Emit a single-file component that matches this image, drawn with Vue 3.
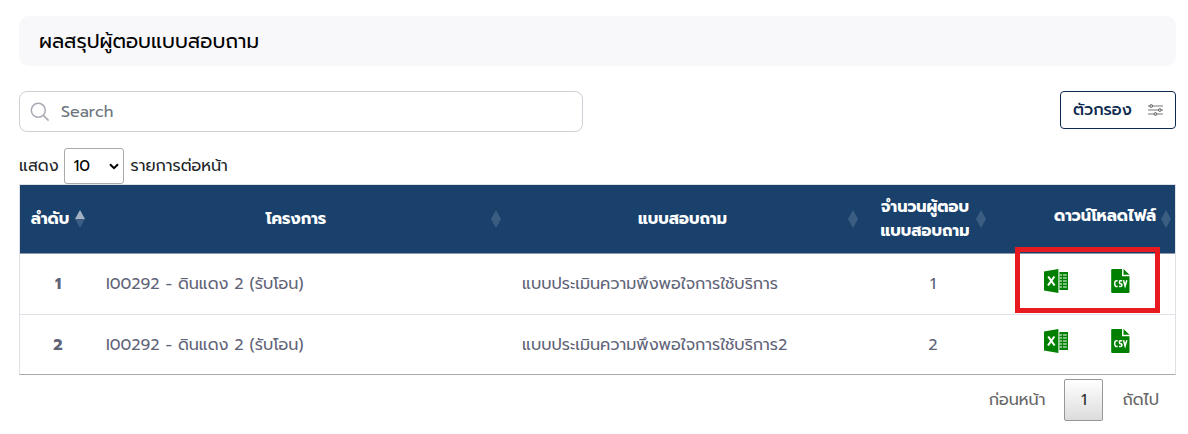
<script setup>
const columns = [
  { key: 'no', lines: ['ลำดับ'], sorted: true },
  { key: 'project', lines: ['โครงการ'] },
  { key: 'form', lines: ['แบบสอบถาม'] },
  { key: 'count', lines: ['จำนวนผู้ตอบ', 'แบบสอบถาม'] },
  { key: 'files', lines: ['ดาวน์โหลดไฟล์'] },
]
const rows = [
  { no: 1, project: 'I00292 - ดินแดง 2 (รับโอน)', form: 'แบบประเมินความพึงพอใจการใช้บริการ', count: 1, marked: true },
  { no: 2, project: 'I00292 - ดินแดง 2 (รับโอน)', form: 'แบบประเมินความพึงพอใจการใช้บริการ2', count: 2 },
]
</script>

<template>
  <main class="page">
    <header class="title"><span class="title-text">ผลสรุปผู้ตอบแบบสอบถาม</span></header>

    <div class="toolbar">
      <div class="search">
        <svg class="search-icon" width="20" height="20" viewBox="0 0 20 20">
          <circle cx="8.3" cy="8.3" r="7" />
          <path d="M13.4 13.4L18.6 18.6" />
        </svg>
        <span class="search-text">Search</span>
      </div>
      <div class="filter">
        <span class="filter-text">ตัวกรอง</span>
        <svg width="15" height="12" viewBox="0 0 15 12">
          <path d="M0 2H15M0 6H15M0 10H15" stroke="#777" stroke-width="1.2" />
          <g fill="#ddd" stroke="#666">
            <circle cx="3.2" cy="2" r="1.4" />
            <circle cx="11.8" cy="6" r="1.4" />
            <circle cx="7.5" cy="10" r="1.4" />
          </g>
        </svg>
      </div>
    </div>

    <div class="length">
      <span class="show-text">แสดง</span>
      <div class="select">
        <span>10</span>
        <svg width="10" height="7" viewBox="0 0 10 7"><path d="M1 1.2L5 5.2L9 1.2" /></svg>
      </div>
      <span class="per-text">รายการต่อหน้า</span>
    </div>

    <div class="table">
      <div class="row head">
        <div v-for="c in columns" :key="c.key" class="th">
          <div class="label">
            <span v-for="l in c.lines" :key="l" :class="['th-text', c.key]">{{ l }}</span>
          </div>
          <svg class="sort" width="10" height="18" viewBox="0 0 10 18">
            <path d="M5 0L10 9H0Z" :class="{ on: c.sorted }" />
            <path d="M0 9H10L5 18Z" />
          </svg>
        </div>
      </div>
      <div v-for="r in rows" :key="r.no" class="row body">
        <div class="td center strong">{{ r.no }}</div>
        <div class="td"><span class="project-text">{{ r.project }}</span></div>
        <div class="td"><span class="form-text">{{ r.form }}</span></div>
        <div class="td center">{{ r.count }}</div>
        <div class="td files">
          <svg width="24" height="24" viewBox="0 0 24 24">
            <path d="M0 2.6L14.4 0V24L0 21.4Z" fill="#008000" />
            <path d="M15.4 3H24V21H15.4Z" fill="#008000" />
            <path d="M15.4 6H18M15.4 9H18M15.4 12H18M15.4 15H18M15.4 18H18M19 6H22.8M19 9H22.8M19 12H22.8M19 15H22.8M19 18H22.8" stroke="#fff" stroke-width="1.1" />
            <path d="M4.2 7.5L10.6 16.5M10.4 7.5L4 16.5" stroke="#fff" stroke-width="2.1" />
          </svg>
          <svg width="19" height="24" viewBox="0 0 19 24">
            <path d="M1.2 0H11V7.2H18.5V23Q18.5 24 17.5 24H1.2Q.2 24 .2 23V1Q.2 0 1.2 0Z" fill="#008000" />
            <path d="M12.5 0L18.5 5.8H12.5Z" fill="#008000" />
            <path d="M6.7 11.9Q3.7 10.9 3.7 14.6T6.7 17.4M11.2 11.9Q8.4 11.1 8.4 13T10 14.7Q11.5 15.6 10.6 17Q9.8 17.8 8.1 17.2M12.5 11.3L14.1 17L15.8 11.3" fill="none" stroke="#fff" stroke-width="1.5" />
          </svg>
          <div v-if="r.marked" class="mark"></div>
        </div>
      </div>
    </div>

    <nav class="pager">
      <span class="prev-text">ก่อนหน้า</span>
      <span class="current">1</span>
      <span class="next-text">ถัดไป</span>
    </nav>
  </main>
</template>

<style>
body { background: #fff; }
</style>

<style scoped>
.page {
  box-sizing: border-box;
  width: 1188px;
  height: 434px;
  padding: 16px 12px 0 19px;
  overflow: hidden;
  font: 16px/24px Prompt, Inter, "Noto Sans Thai", "Noto Sans", sans-serif;
  color: #212529;
}
.page * { box-sizing: border-box; }
span { white-space: nowrap; }
svg { display: block; flex: none; }
.title { height: 50px; padding-left: 20px; display: flex; align-items: center; border-radius: 10px; background: #f8f8fb; color: #000; font-size: 20px; }
.toolbar { display: flex; justify-content: space-between; align-items: flex-start; margin-top: 25px; }
.search { width: 564px; height: 41px; padding-left: 10px; display: flex; align-items: center; gap: 11px; border: 1px solid #cfd0d8; border-radius: 8px; color: #6c757d; }
.search-icon { fill: none; stroke: #a9a9b4; stroke-width: 1.5; }
.filter { width: 116px; height: 38px; padding: 0 12px; display: flex; align-items: center; justify-content: space-between; border: 1px solid #0e2a50; border-radius: 4px; color: #0e2a50; font-weight: 500; }
.length { display: flex; align-items: center; height: 36px; margin-top: 16px; }
.select { width: 60px; height: 36px; margin: 0 7px 0 5px; padding: 0 4px 0 9px; display: flex; align-items: center; justify-content: space-between; border: 1px solid #aaa; border-radius: 3px; color: #000; }
.select svg { fill: none; stroke: #000; stroke-width: 2; }
.table { width: 1157px; border: 1px solid #dee2e6; border-bottom-color: #aaa; }
.row { display: grid; grid-template-columns: 76px 416px 357px 128px 178px; }
.head { height: 69px; background: #19416c; border-bottom: 1px solid #8c98a8; color: #fff; font-weight: 700; }
.th { display: flex; align-items: center; justify-content: space-between; padding: 0 11px 0 10px; }
.label { flex: 1; display: flex; flex-direction: column; align-items: center; padding-right: 5px; }
.sort { fill: #fff; fill-opacity: .15; }
.sort .on { fill-opacity: .6; }
.body { height: 60px; color: #5f6478; }
.body + .body { border-top: 1px solid #dee2e6; }
.td { display: flex; align-items: center; padding: 0 10px; }
.center { justify-content: center; }
.strong { font-weight: 700; }
.files { position: relative; gap: 43px; padding: 0 0 7px 47px; }
.mark { position: absolute; left: 18px; top: -7px; width: 145px; height: 66px; border: 5px solid #e71b1f; }
.pager { height: 42px; margin-top: 4px; padding-right: 17px; display: flex; align-items: center; justify-content: flex-end; color: #666; }
.current { width: 39px; height: 42px; margin: 0 19px; line-height: 40px; text-align: center; border: 1px solid #979797; border-radius: 2px; background: linear-gradient(#fff, #dcdcdc); color: #333; }
</style>
